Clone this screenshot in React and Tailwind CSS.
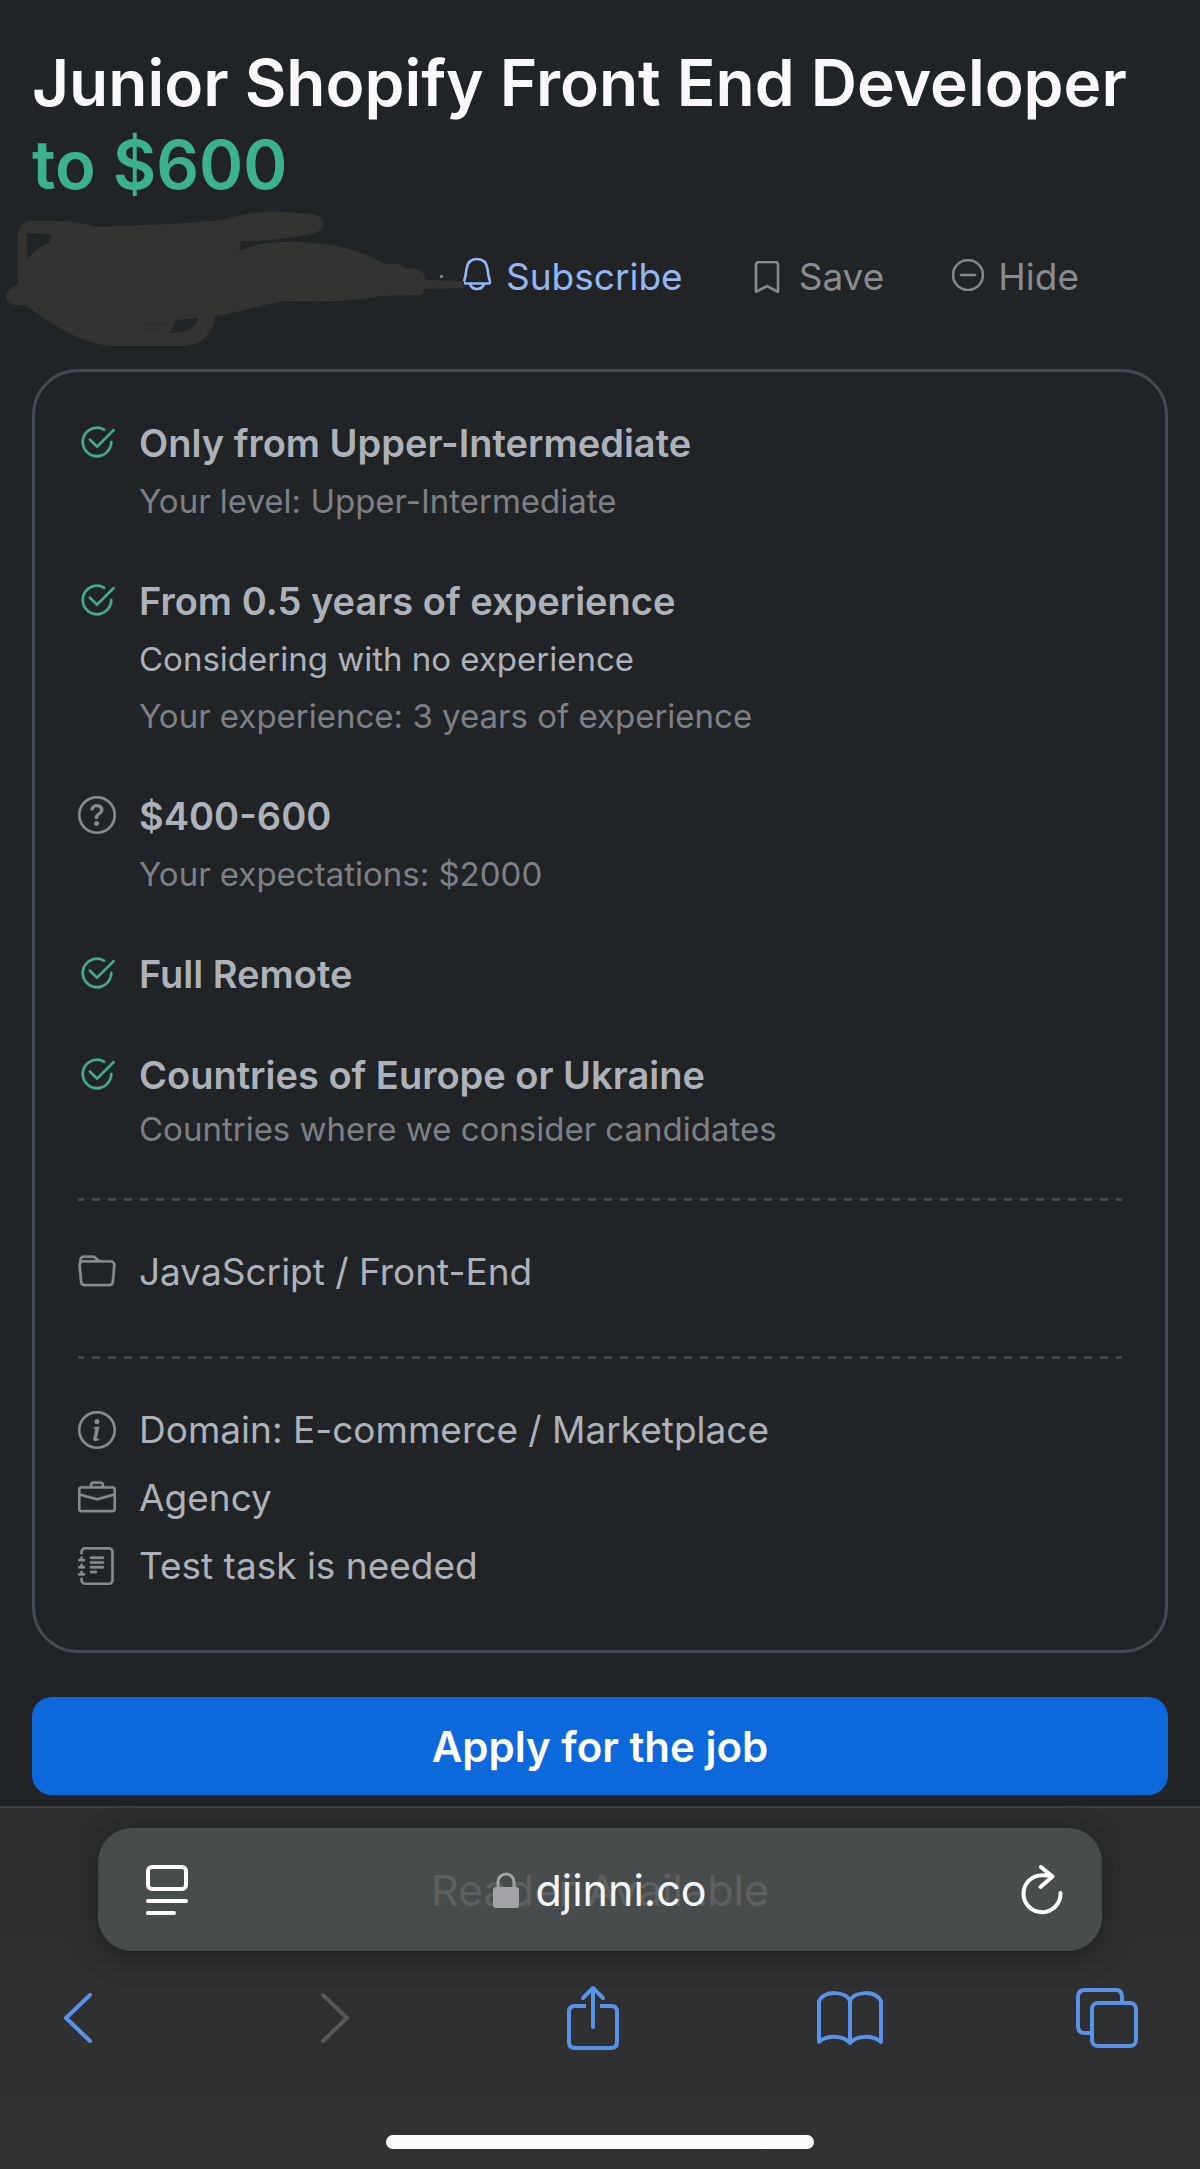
import React from 'react';
import {
  BsBookmark, BsBriefcase, BsCheck2Circle, BsDashCircle, BsFolder,
  BsInfoCircle, BsJournalText, BsQuestionCircle,
} from 'react-icons/bs';

const requirements = [
  {
    title: 'Only from Upper-Intermediate',
    ok: true,
    notes: [{ text: 'Your level: Upper-Intermediate' }],
  },
  {
    title: 'From 0.5 years of experience',
    ok: true,
    notes: [
      { text: 'Considering with no experience', strong: true },
      { text: 'Your experience: 3 years of experience' },
    ],
  },
  {
    title: '$400-600',
    ok: false,
    notes: [{ text: 'Your expectations: $2000' }],
  },
  { title: 'Full Remote', ok: true, notes: [] },
  {
    title: 'Countries of Europe or Ukraine',
    ok: true,
    tight: true,
    notes: [{ text: 'Countries where we consider candidates' }],
  },
];

const details = [
  { icon: BsInfoCircle, text: 'Domain: E-commerce / Marketplace' },
  { icon: BsBriefcase, text: 'Agency' },
  { icon: BsJournalText, text: 'Test task is needed' },
];

function BellIcon() {
  return (
    <svg viewBox="0 0 30 40" className="w-[30px] h-10 shrink-0" fill="none" stroke="currentColor" strokeWidth="2.6" strokeLinejoin="round">
      <path d="M2 24.500C3.500 20 4 17 4.500 12C5.500 5 9 2 15 2s9.500 3 10.500 10c.5 5 1 8 2.500 12.500q.3 2-1.500 2H3.500q-1.800 0-1.500-2z" />
      <path d="M8 27c1 3 3.500 5 7 5s6-2 7-5" />
    </svg>
  );
}

// Scribble that hides the company name
function Redaction() {
  return (
    <svg viewBox="0 0 480 160" className="absolute left-0 -top-4 w-[480px] h-40" aria-hidden="true">
      <path
        fill="#333332"
        d="M18 46C18 37 22 32 32 31C55 30 78 31 97 37C140 35 190 34 220 30C246 24 265 20 284 22L312 24C327 26 327 40 314 43C290 49 264 51 241 51L239 61C262 51 290 50 322 54C350 57 372 66 384 74L400 74L406 79C418 77 426 82 425 90L464 91V98L424 99C424 104 422 105 418 105L380 106C350 112 316 112 284 111C262 115 240 122 215 126C214 140 206 154 184 156H110C76 152 46 130 25 115C14 116 6 114 6 107C8 98 14 98 18 94z"
      />
      <path fill="#212427" d="M27 43L50 44C53 48 50 52 46 54C36 60 31 64 27 70z" />
      <path fill="#212427" d="M176 130L198 128C196 138 188 143 168 143C172 140 174 136 176 130z" />
      <path fill="none" stroke="#282a2b" strokeWidth="1" d="M146 134h20M142 140h18M36 117l6 6" />
    </svg>
  );
}

function Header() {
  return (
    <header>
      <h1 className="px-8 text-[64px] leading-[82px] font-semibold text-[#f9f9fb]">
        Junior Shopify Front End Developer <span className="block text-[67px] text-[#3bb28d]">to $600</span>
      </h1>
      <div className="relative h-[142px] mb-[21px] flex items-center">
        <div className="w-full flex items-center pl-[438px] text-[37px] leading-[52px] text-[#888b90]">
          <span className="w-6 text-[24px]" aria-hidden="true">·</span>
          <button className="flex items-center gap-[14px] text-[#93b8f4]">
            <BellIcon />
            Subscribe
          </button>
          <button className="flex items-center gap-4 ml-[68px]">
            <BsBookmark className="size-8" strokeWidth={0.3} />
            Save
          </button>
          <button className="flex items-center gap-[14px] ml-[68px]">
            <BsDashCircle className="size-8 mb-1" strokeWidth={0.3} />
            Hide
          </button>
        </div>
        <Redaction />
      </div>
    </header>
  );
}

function Requirement({ item }) {
  const Icon = item.ok ? BsCheck2Circle : BsQuestionCircle;
  return (
    <li className="flex gap-[23px]">
      <Icon
        className={`size-[38px] shrink-0 mt-[10px] ${item.ok ? 'text-[#45ae8c]' : 'text-[#888b90]'}`}
        strokeWidth={0.15}
      />
      <div>
        <h2 className="text-[38px] leading-[60px] font-semibold text-[#adb2ba]">{item.title}</h2>
        {item.notes.map(note => (
          <p
            key={note.text}
            className={`text-[33px] ${item.tight ? 'leading-[48px]' : 'leading-[57px]'} ${note.strong ? 'text-[#adb2ba]' : 'text-[#7d8085]'}`}
          >
            {note.text}
          </p>
        ))}
      </div>
    </li>
  );
}

function Divider() {
  return (
    <svg className="block w-full h-[3px]" aria-hidden="true">
      <line x1="-2" y1="1.5" x2="100%" y2="1.5" stroke="#45484b" strokeWidth="3" strokeDasharray="8 8" />
    </svg>
  );
}

function JobCard() {
  return (
    <section className="mx-8 px-[43px] border-[3px] border-[#444a51] rounded-[46px] pt-[41px] pb-[50px]">
      <ul className="flex flex-col gap-[41px] mb-[45px]">
        {requirements.map(item => <Requirement key={item.title} item={item} />)}
      </ul>
      <Divider />
      <div className="flex items-center gap-[23px] pt-[37px] pb-[50px] text-[37px] leading-[68px] text-[#adb2ba]">
        <BsFolder className="size-[38px] shrink-0 text-[#888b90]" strokeWidth={0.15} />
        JavaScript / Front-End
      </div>
      <Divider />
      <ul className="mt-[37px] text-[37px] leading-[68px] text-[#adb2ba]">
        {details.map(({ icon: Icon, text }) => (
          <li key={text} className="flex items-center gap-[23px]">
            <Icon className="size-[38px] shrink-0 text-[#888b90]" strokeWidth={0.15} />
            {text}
          </li>
        ))}
      </ul>
    </section>
  );
}

function BrowserBar() {
  return (
    <footer className="bg-linear-to-b from-[#2b2c2e] to-[#313233] border-t-2 border-[#3c3f42] pt-5 pb-5">
      <div className="mx-[98px] h-[123px] px-[39px] flex items-center justify-between bg-[#494c4c] rounded-[34px] shadow-[0_6px_30px_rgba(0,0,0,0.25)] text-white">
        <button aria-label="Page menu" className="w-[60px] flex justify-center">
          <svg viewBox="0 0 42 50" className="w-[42px] h-[50px]" fill="none" stroke="currentColor" strokeWidth="4" strokeLinecap="round">
            <rect x="2" y="2" width="38" height="22" rx="4" />
            <path d="M2 36h38M2 48h26" />
          </svg>
        </button>
        <div className="relative flex items-center justify-center text-[43px] leading-[52px]">
          <span className="absolute whitespace-nowrap text-[#5e6061]">Reader Available</span>
          <span className="relative flex items-center gap-4 text-[#f4f5f5]">
            <svg viewBox="0 0 26 36" className="w-[26px] h-9" aria-hidden="true">
              <rect x="0" y="15" width="26" height="21" rx="3" fill="#a3a4a7" />
              <path d="M5 16V10a8 8 0 0 1 16 0v6" fill="none" stroke="#a3a4a7" strokeWidth="3" />
            </svg>
            djinni.co
          </span>
        </div>
        <button aria-label="Reload" className="w-[60px] flex justify-end">
          <svg viewBox="0 0 42 50" className="w-[42px] h-[50px]" fill="none" stroke="currentColor" strokeWidth="4" strokeLinecap="round" strokeLinejoin="round">
            <path d="M39.500 28A18.500 18.500 0 1 1 21 10.200Q26 10 30 11.500M20 2l11.500 9.500L19.500 22" />
          </svg>
        </button>
      </div>
      <nav className="mt-[34px] pl-[45px] pr-[60px] h-[66px] flex items-center justify-between text-[#5a92e8]">
        <button aria-label="Back" className="w-[66px] flex justify-center">
          <svg viewBox="0 0 30 50" className="w-[30px] h-[50px]" fill="none" stroke="currentColor" strokeWidth="4" strokeLinecap="round" strokeLinejoin="round">
            <path d="M27 2L3 25l24 23" />
          </svg>
        </button>
        <button aria-label="Forward" className="w-[66px] flex justify-center text-[#55575a]" disabled>
          <svg viewBox="0 0 30 50" className="w-[30px] h-[50px]" fill="none" stroke="currentColor" strokeWidth="4" strokeLinecap="round" strokeLinejoin="round">
            <path d="M3 2l24 23L3 48" />
          </svg>
        </button>
        <button aria-label="Share" className="w-[66px] flex justify-center">
          <svg viewBox="0 0 54 66" className="w-[54px] h-[66px]" fill="none" stroke="currentColor" strokeWidth="4" strokeLinecap="round" strokeLinejoin="round">
            <path d="M27 42V3M17 13L27 3l10 10" />
            <path strokeLinecap="butt" d="M20 21H9q-6 0-6 6v30q0 6 6 6h36q6 0 6-6V27q0-6-6-6H34" />
          </svg>
        </button>
        <button aria-label="Bookmarks" className="w-[66px] flex justify-center">
          <svg viewBox="0 0 66 56" className="w-[66px] h-14" fill="none" stroke="currentColor" strokeWidth="4" strokeLinejoin="round">
            <path d="M33 11C29 1 8 0 2 11v41c8-7 24-7 31 1c7-8 23-8 31-1V11C58 0 37 1 33 11zv42" />
          </svg>
        </button>
        <button aria-label="Tabs" className="w-[66px] flex justify-center">
          <svg viewBox="0 0 62 60" className="w-[62px] h-[60px]" fill="none" stroke="currentColor" strokeWidth="4">
            <rect x="16" y="15" width="44" height="43" rx="6" />
            <path d="M16 45H9q-7 0-7-7V9q0-7 7-7h31q6 0 6 7v6" />
          </svg>
        </button>
      </nav>
      <div className="mt-[84px] mx-auto w-[428px] h-[14px] rounded-full bg-[#fcfcfc]" />
    </footer>
  );
}

export default function App() {
  return (
    <div className="min-h-screen flex flex-col bg-[#212427] pt-[42px] font-['Inter','Liberation_Sans',sans-serif]">
      <Header />
      <JobCard />
      <div className="px-8 pt-11 pb-2 mb-auto flex">
        <button className="flex-1 h-[98px] rounded-[20px] bg-[#0d68dc] text-white text-[42px] font-semibold">
          Apply for the job
        </button>
      </div>
      <BrowserBar />
    </div>
  );
}
